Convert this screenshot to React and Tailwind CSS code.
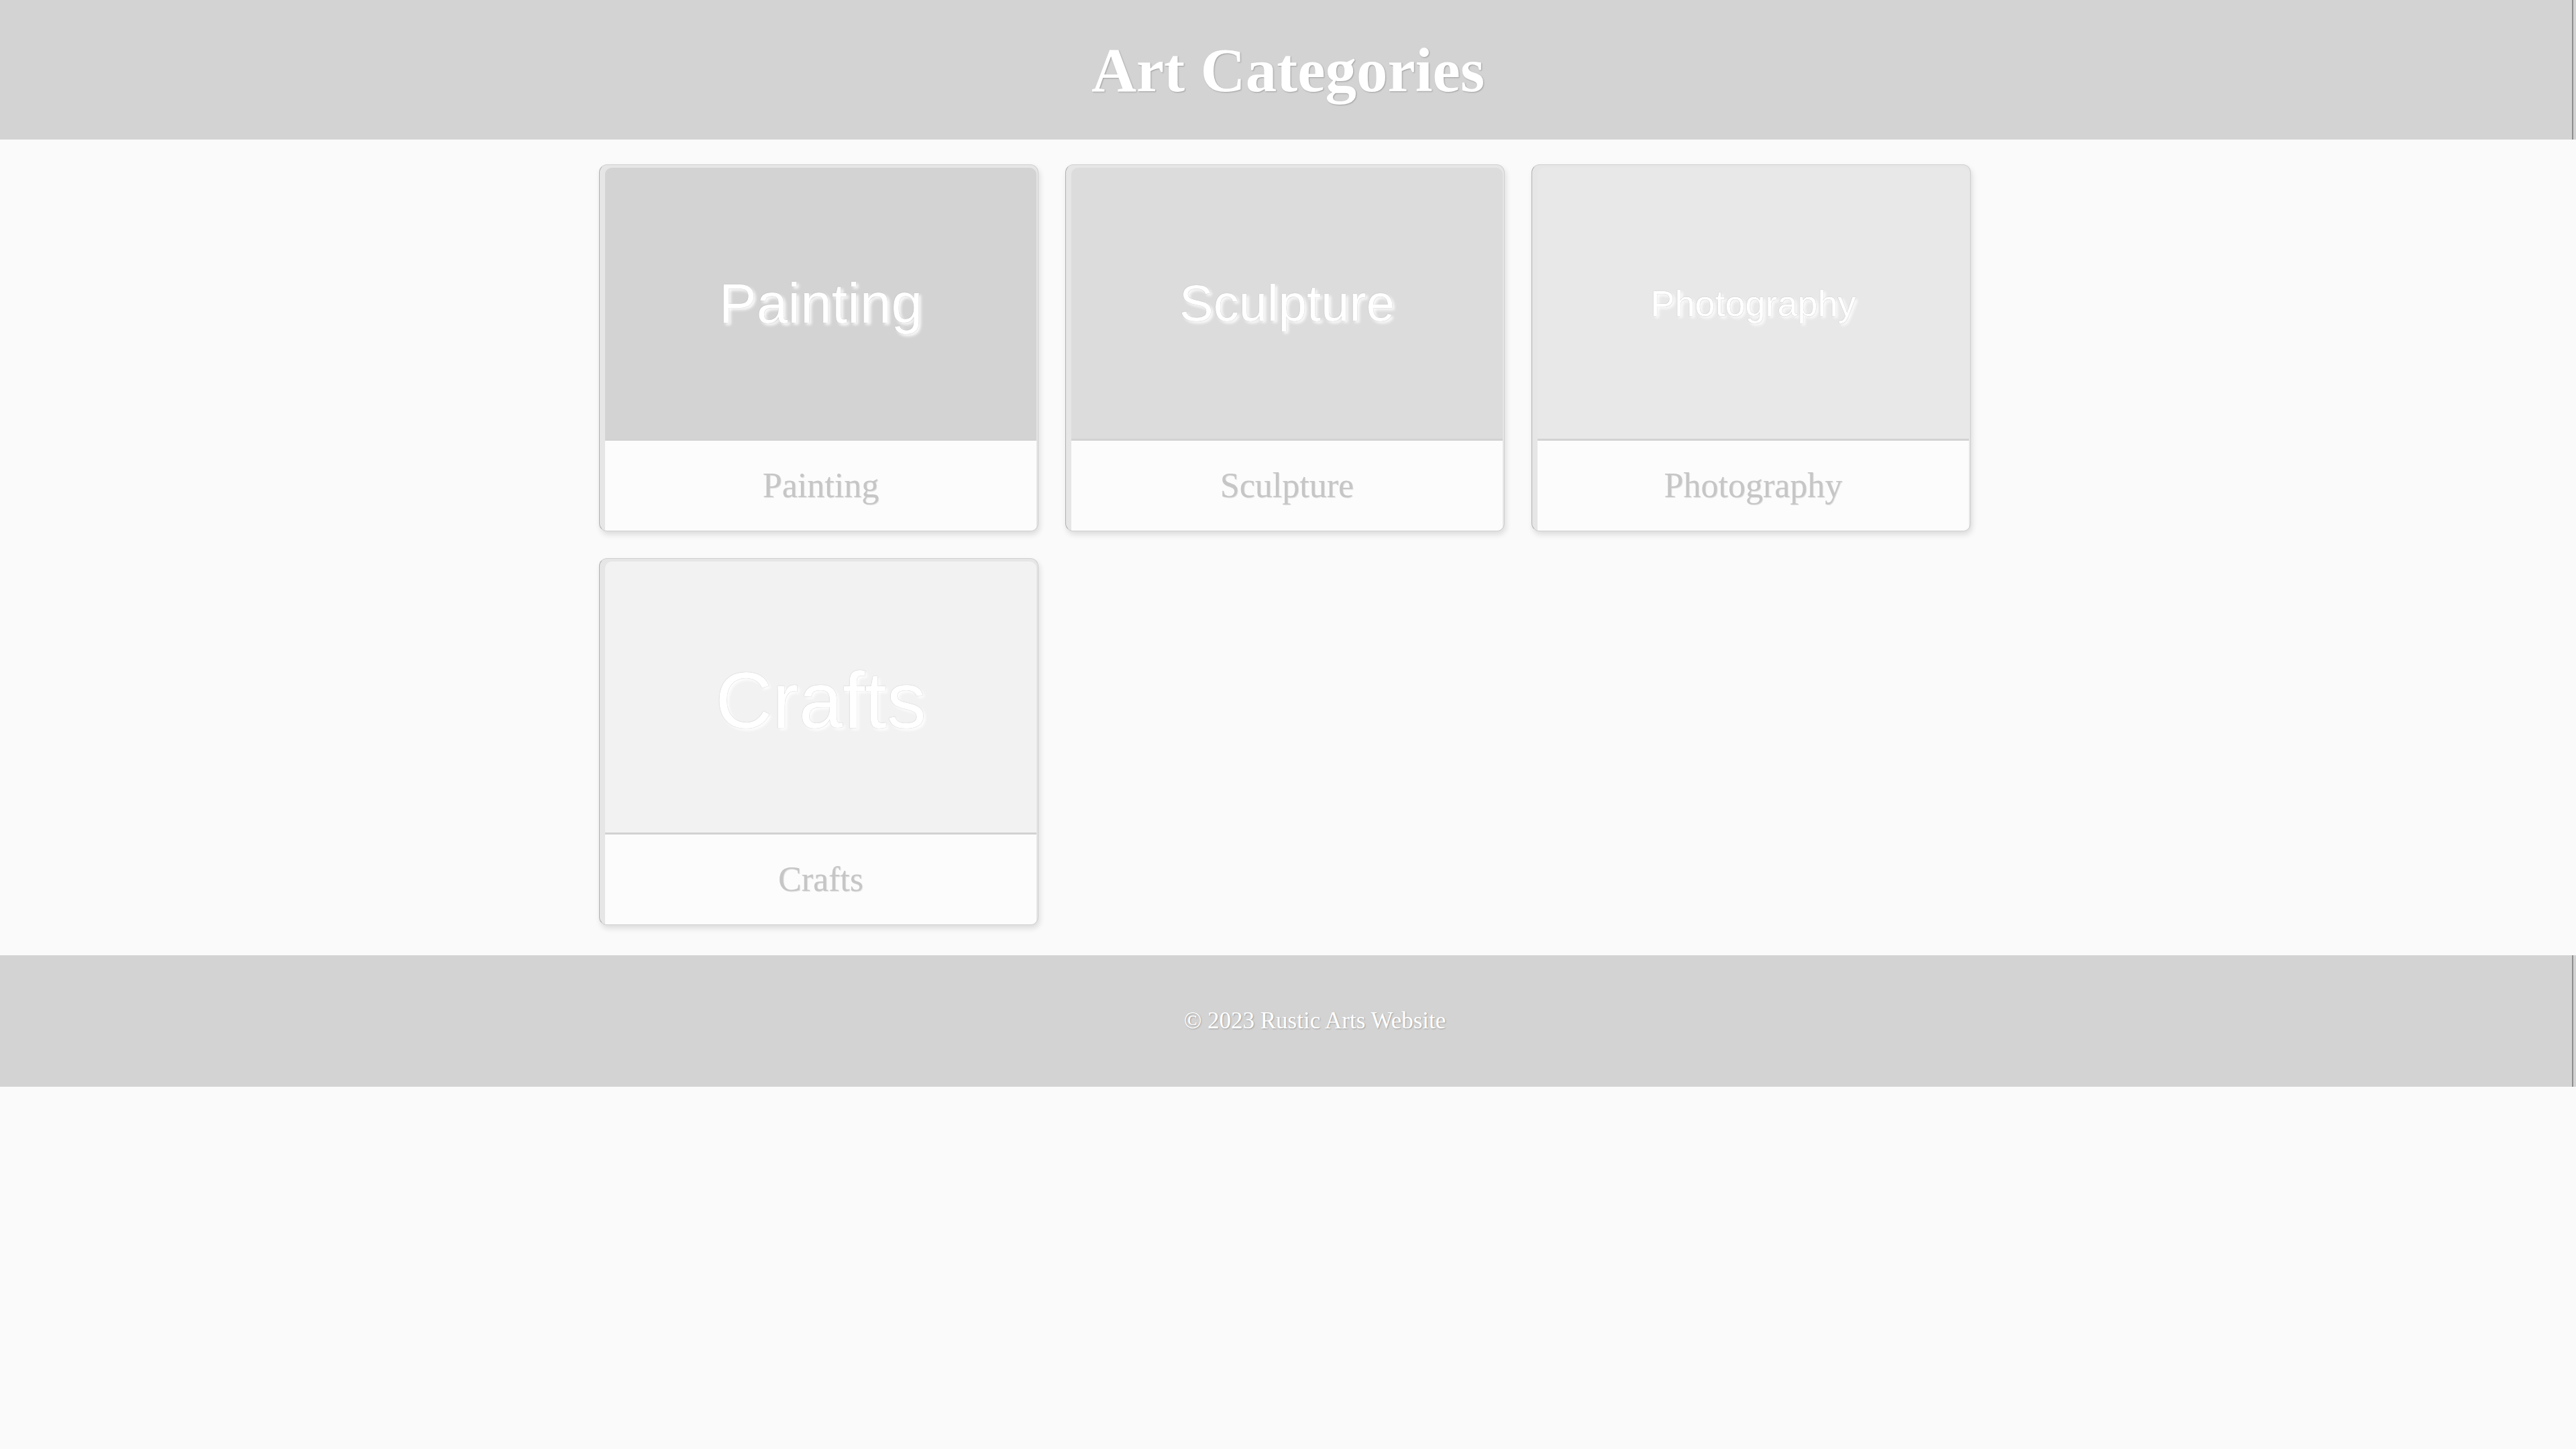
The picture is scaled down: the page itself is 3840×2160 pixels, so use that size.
const categories = [
  { name: 'Painting', bg: 'bg-[#d3d3d3]', size: 'text-[84px]' },
  { name: 'Sculpture', bg: 'bg-[#dcdcdc]', size: 'text-[76px]' },
  { name: 'Photography', bg: 'bg-[#e8e8e8]', size: 'text-[54px]' },
  { name: 'Crafts', bg: 'bg-[#f2f2f2]', size: 'text-[118px] pt-[10px]' },
];

function CategoryCard({ name, bg, size }) {
  return (
    <div className="flex flex-col rounded-[12px] border border-[#cfcfcf] border-l-[#b0b0b0] bg-[#e6e6e6] pl-[8px] pt-[4px] pr-[2px] overflow-hidden shadow-[2px_5px_8px_rgba(0,0,0,0.12)]">
      {/* placeholder image */}
      <div className={`h-[404px] rounded-t-[10px] flex items-center justify-center ${bg}`}>
        <span
          className={`font-['Liberation_Sans',Arial,sans-serif] text-white ${size} [text-shadow:0_0_1px_rgba(0,0,0,0.35),3px_3px_4px_rgba(255,255,255,0.95)]`}
        >
          {name}
        </span>
      </div>

      <div className="h-[137px] border-t-[3px] border-[#d2d2d2] bg-[#fcfcfc] flex items-center justify-center">
        <h3 className="text-[52px] text-[#c6c6c6] [text-shadow:1px_1px_1px_rgba(0,0,0,0.12)]">
          {name}
        </h3>
      </div>
    </div>
  );
}

export default function App() {
  return (
    <div className="min-h-screen bg-[#fafafa] font-['Liberation_Serif',Georgia,serif]">
      {/* Header */}
      <header className="h-[208px] bg-[#d3d3d3] flex items-center justify-center shadow-[inset_-4px_0_0_#d3d3d3,inset_-6px_0_0_#8e8e8e]">
        <h1 className="text-[93px] font-bold text-white leading-none [text-shadow:1px_1px_2px_rgba(0,0,0,0.25)]">
          Art Categories
        </h1>
      </header>

      {/* Grid */}
      <main className="pt-[37px] pb-[45px] pr-[9px]">
        <div className="w-[2045px] mx-auto grid grid-cols-3 gap-[40px]">
          {categories.map((c) => (
            <CategoryCard key={c.name} {...c} />
          ))}
        </div>
      </main>

      {/* Footer */}
      <footer className="h-[196px] bg-[#d3d3d3] flex items-center justify-center pl-[80px] shadow-[inset_-4px_0_0_#d3d3d3,inset_-6px_0_0_#8e8e8e]">
        <p className="text-[35px] text-white [text-shadow:1px_1px_2px_rgba(0,0,0,0.25)]">
          © 2023 Rustic Arts Website
        </p>
      </footer>
    </div>
  );
}
